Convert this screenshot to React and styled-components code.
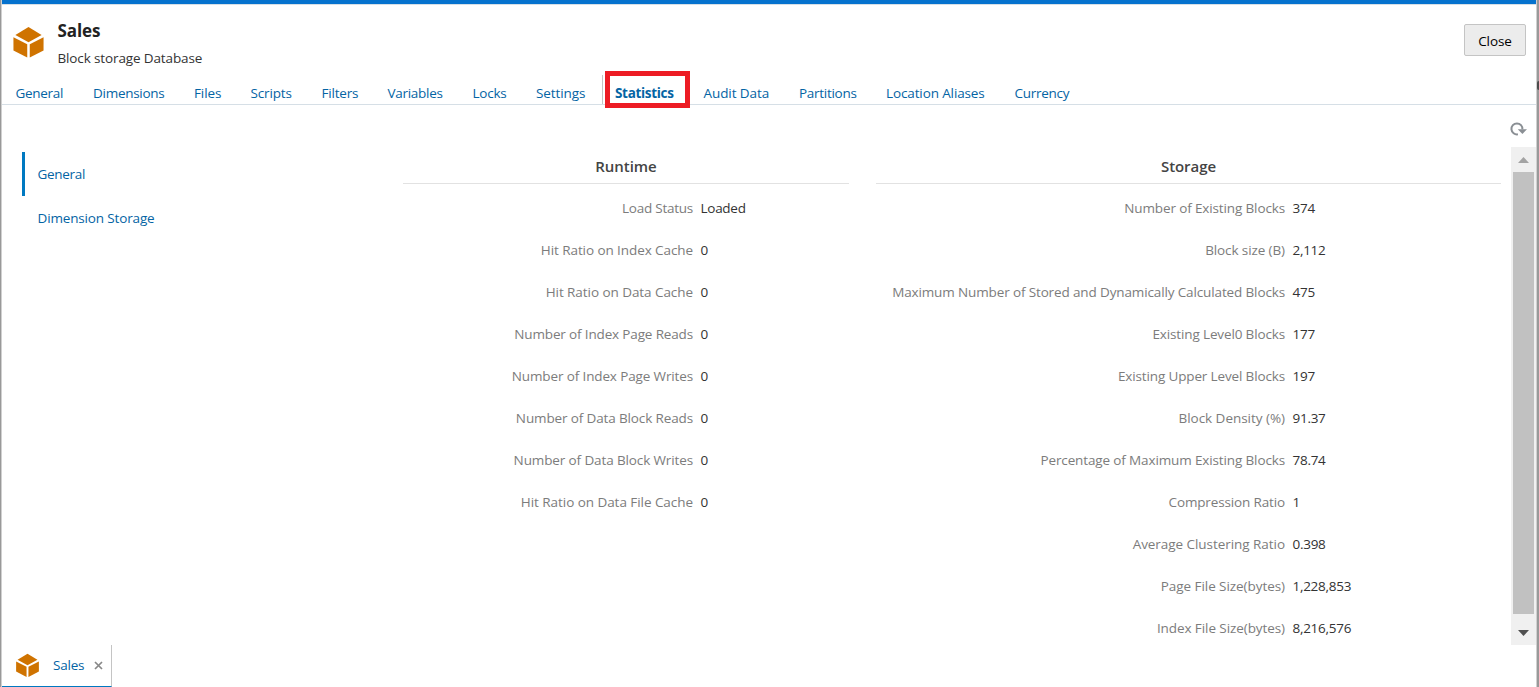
import React from "react";
import styled, { createGlobalStyle } from "styled-components";

const GlobalStyle = createGlobalStyle`
  * { box-sizing: border-box; }
  body {
    margin: 0;
    background: #fff;
    font-family: "Open Sans", "Noto Sans", sans-serif;
    font-size: 13.5px;
    color: #333;
    overflow: hidden;
  }
`;

const Window = styled.div`
  width: 1539px;
  height: 687px;
  display: flex;
  background: #fff;
`;
const LeftEdge = styled.div`
  width: 2px;
  background: linear-gradient(90deg, #999 50%, #d0d0d0 50%);
`;
const RightEdge = styled.div`
  width: 3px;
  padding-top: 81px;
  background: linear-gradient(90deg, #d0d0d0 34%, #999 34%);
`;
const EdgeHandle = styled.div`
  width: 2px;
  height: 9px;
  margin-left: 1px;
  border-radius: 2px 0 0 2px;
  background: #4c4c4c;
`;
const Main = styled.div`
  width: 1534px;
  display: flex;
  flex-direction: column;
`;
const TopBar = styled.div`
  height: 5px;
  flex: none;
  background: #0572ce;
  border-bottom: 1px solid #d6dfe6;
  margin-right: -1px;
`;
const Header = styled.header`
  height: 70px;
  flex: none;
  display: flex;
  padding: 0 10px 0 10px;
`;
const HeaderIcon = styled.div`
  width: 45.5px;
  padding-top: 21px;
  svg { display: block; }
`;
const Titles = styled.div`
  flex: 1;
  padding-top: 14px;
`;
const Title = styled.h1`
  margin: 0;
  font-size: 17px;
  line-height: 24px;
  font-weight: 700;
  letter-spacing: -0.1px;
  color: #222;
`;
const Subtitle = styled.div`
  margin-top: 5px;
  line-height: 20px;
  letter-spacing: -0.13px;
`;
const CloseButton = styled.button`
  width: 62px;
  height: 32px;
  margin-top: 19px;
  padding: 2px 0 0;
  border: 1px solid #c4c4c4;
  border-radius: 2px;
  background: #ececec;
  font: inherit;
  letter-spacing: -0.1px;
  color: #000;
`;
const Label = styled.span`
  white-space: nowrap;
  letter-spacing: ${(p) => p.$ls || 0}px;
`;
const Tabs = styled.nav`
  height: 30px;
  flex: none;
  display: flex;
  padding-left: 13.5px;
  border-bottom: 1px solid #d6dfe6;
`;
const Tab = styled.div`
  position: relative;
  width: ${(p) => p.$w}px;
  height: 29px;
  line-height: 36px;
  color: #0464a4;
  font-weight: ${(p) => (p.$active ? 700 : 400)};
`;
const Divider = styled.div`
  width: 1px;
  height: 29px;
  margin: 0 12px 0 -13px;
  background: #c4c4c4;
`;
const Highlight = styled.div`
  position: absolute;
  left: -10px;
  top: -4px;
  width: 85px;
  height: 37px;
  border: 5px solid #ed1c24;
`;
const Tools = styled.div`
  height: 42px;
  flex: none;
  display: flex;
  justify-content: flex-end;
  padding: 17px 9px 0 0;
`;
const Body = styled.div`
  height: 498px;
  flex: none;
  display: flex;
`;
const SideNav = styled.div`
  width: 381px;
  margin-left: 20px;
  padding-top: 5px;
`;
const SideItem = styled.div`
  height: 44px;
  line-height: 44px;
  padding-left: 12.5px;
  border-left: 3px solid ${(p) => (p.$active ? "#0079c1" : "transparent")};
  color: #0464a4;
`;
const Panel = styled.section`
  width: ${(p) => p.$w}px;
  margin-right: ${(p) => p.$gap}px;
  padding-top: 5px;
`;
const PanelTitle = styled.h2`
  margin: 0 0 3px;
  height: 32px;
  line-height: 29px;
  text-align: center;
  font-size: 15px;
  font-weight: 600;
  letter-spacing: -0.05px;
  color: #444;
  border-bottom: 1px solid #e2e2e2;
`;
const Row = styled.div`
  display: flex;
  height: 42px;
  line-height: 42px;
`;
const Key = styled.div`
  width: ${(p) => p.$w}px;
  text-align: right;
  color: #7c7c7c;
  margin-right: 7.5px;
`;
const Value = styled.div`
  color: #333;
  letter-spacing: -0.27px;
`;
const ScrollBar = styled.div`
  width: 25px;
  background: #f0f0f0;
  display: flex;
  flex-direction: column;
  align-items: center;
`;
const Arrow = styled.div`
  width: 11px;
  height: 6px;
  background: ${(p) => (p.$down ? "#505050" : "#a3a3a3")};
  clip-path: ${(p) =>
    p.$down ? "polygon(0 0, 100% 0, 50% 100%)" : "polygon(50% 0, 100% 100%, 0 100%)"};
  margin: ${(p) => (p.$down ? "16px 0 0" : "10px 0 9px")};
`;
const Thumb = styled.div`
  width: 21px;
  height: 442px;
  background: #c1c1c1;
`;
const Footer = styled.footer`
  flex: 1;
`;
const FooterTab = styled.div`
  width: 110px;
  height: 42px;
  display: flex;
  align-items: center;
  border-right: 1px solid #c4c4c4;
  border-bottom: 1px solid #0079c1;
  padding-left: 13px;
  color: #0464a4;
  svg { flex: none; }
`;
const FooterLabel = styled.span`
  width: 41px;
  margin-left: 13px;
  padding-bottom: 2px;
  white-space: nowrap;
  letter-spacing: -0.2px;
`;

const Cube = ({ size }) => (
  <svg width={size} height={size} viewBox="0 0 34 34" fill="#cf7300">
    <path d="M17 1 L30.5 9.3 L17 16.7 L3.5 9.3Z" />
    <path d="M1.5 11.5 L15.7 18.7 V32.5 L1.5 25.2Z" />
    <path d="M32.5 11.5 L18.3 18.7 V32.5 L32.5 25.2Z" />
  </svg>
);
const Refresh = () => (
  <svg width="17" height="15" viewBox="0 0 17 15">
    <path d="M7.9 12.3 A5.5 5.5 0 1 1 12.4 7.4" fill="none" stroke="#8a8f94" strokeWidth="2" />
    <path d="M7.8 7.2 H17 L12.4 12Z" fill="#8a8f94" />
  </svg>
);
const Cross = () => (
  <svg width="9" height="9" viewBox="0 0 9 9">
    <path d="M1 1 L8 8 M8 1 L1 8" stroke="#888" strokeWidth="1.7" />
  </svg>
);

const tabs = [
  ["General", 77.5, -0.3], ["Dimensions", 101, -0.27], ["Files", 56.5, -0.1],
  ["Scripts", 71, -0.15], ["Filters", 66, -0.2], ["Variables", 85, -0.28],
  ["Locks", 63.5, -0.25], ["Settings", 79, -0.1], ["Statistics", 88.5, -0.32, true],
  ["Audit Data", 95.5, -0.08], ["Partitions", 87, -0.28],
  ["Location Aliases", 128.5, -0.12], ["Currency", 60, -0.28],
];
const runtime = [
  ["Load Status", "Loaded", -0.25],
  ["Hit Ratio on Index Cache", "0", -0.08],
  ["Hit Ratio on Data Cache", "0", -0.06],
  ["Number of Index Page Reads", "0", -0.15],
  ["Number of Index Page Writes", "0", -0.13],
  ["Number of Data Block Reads", "0", -0.13],
  ["Number of Data Block Writes", "0", -0.12],
  ["Hit Ratio on Data File Cache", "0", -0.05],
];
const storage = [
  ["Number of Existing Blocks", "374", -0.13],
  ["Block size (B)", "2,112", -0.1],
  ["Maximum Number of Stored and Dynamically Calculated Blocks", "475", -0.13],
  ["Existing Level0 Blocks", "177", -0.14],
  ["Existing Upper Level Blocks", "197", -0.14],
  ["Block Density (%)", "91.37", -0.03],
  ["Percentage of Maximum Existing Blocks", "78.74", -0.13],
  ["Compression Ratio", "1", -0.14],
  ["Average Clustering Ratio", "0.398", -0.05],
  ["Page File Size(bytes)", "1,228,853", -0.06],
  ["Index File Size(bytes)", "8,216,576", -0.08],
];

const Stats = ({ title, rows, width, gap, keyWidth }) => (
  <Panel $w={width} $gap={gap}>
    <PanelTitle>{title}</PanelTitle>
    {rows.map(([k, v, ls]) => (
      <Row key={k}>
        <Key $w={keyWidth}><Label $ls={ls}>{k}</Label></Key>
        <Value>{v}</Value>
      </Row>
    ))}
  </Panel>
);

export default function App() {
  return (
    <Window>
      <GlobalStyle />
      <LeftEdge />
      <Main>
        <TopBar />
        <Header>
          <HeaderIcon><Cube size={33} /></HeaderIcon>
          <Titles>
            <Title>Sales</Title>
            <Subtitle>Block storage Database</Subtitle>
          </Titles>
          <CloseButton>Close</CloseButton>
        </Header>
        <Tabs>
          {tabs.map(([name, w, ls, active]) => (
            <React.Fragment key={name}>
              {active && <Divider />}
              <Tab $w={w} $active={active}>
                <Label $ls={ls}>{name}</Label>
                {active && <Highlight />}
              </Tab>
            </React.Fragment>
          ))}
        </Tabs>
        <Tools><Refresh /></Tools>
        <Body>
          <SideNav>
            <SideItem $active><Label $ls={-0.3}>General</Label></SideItem>
            <SideItem><Label $ls={-0.15}>Dimension Storage</Label></SideItem>
          </SideNav>
          <Stats title="Runtime" rows={runtime} width={446} gap={27} keyWidth={290} />
          <Stats title="Storage" rows={storage} width={625} gap={10} keyWidth={409} />
          <ScrollBar>
            <Arrow />
            <Thumb />
            <Arrow $down />
          </ScrollBar>
        </Body>
        <Footer>
          <FooterTab>
            <Cube size={25} />
            <FooterLabel>Sales</FooterLabel>
            <Cross />
          </FooterTab>
        </Footer>
      </Main>
      <RightEdge><EdgeHandle /></RightEdge>
    </Window>
  );
}
